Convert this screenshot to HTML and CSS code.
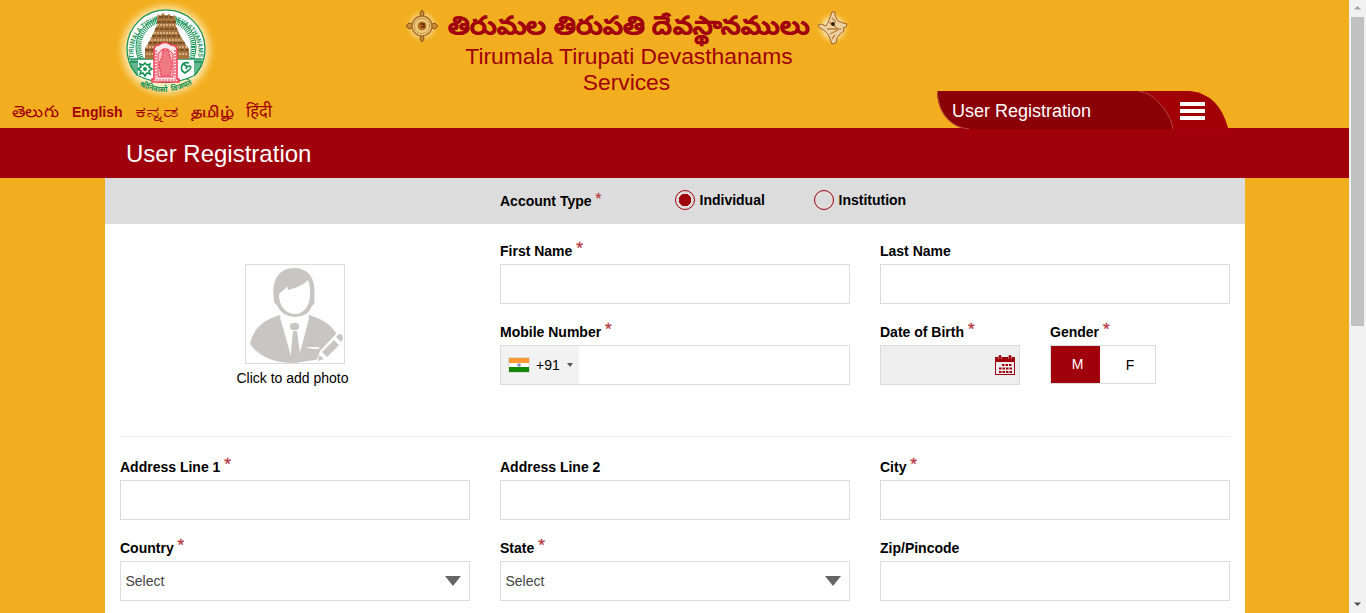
FILE: index.html
```html
<!DOCTYPE html>
<html lang="en">
<head>
<meta charset="utf-8">
<title>User Registration</title>
<link rel="stylesheet" href="styles.css">
</head>
<body>
<div class="page">
<header class="header">
  <div class="brand">
    <svg class="logo" viewBox="0 0 110 105">
      <defs>
        <radialGradient id="glow"><stop offset=".72" stop-color="#fff0c4"/><stop offset=".82" stop-color="#fbd98a" stop-opacity=".8"/><stop offset="1" stop-color="#f2ae1e" stop-opacity="0"/></radialGradient>
        <path id="arc" d="M24 58 A32.500 32.500 0 1 1 88 58"/>
        <path id="arcLow" d="M28 85 Q55 100 84 83"/>
      </defs>
      <circle cx="56" cy="50" r="52" fill="url(#glow)"/>
      <path d="M27 75A39 39 0 1 1 85 75Q56 90 27 75z" fill="#fff" stroke="#159254" stroke-width="1.300"/>
      <circle cx="56" cy="47" r="30" fill="#fff" stroke="#159254" stroke-width="1"/>
      <circle cx="56" cy="47" r="27" fill="none" stroke="#159254" stroke-width="4.500" stroke-dasharray="1 1"/>
      <text class="logo-ring"><textPath href="#arc" textLength="112" lengthAdjust="spacingAndGlyphs">TIRUMALA TIRUPATI • DEVASTHANAMS</textPath></text>
      <path d="M28 59h56v16q-28 12-56 0z" fill="#fff"/>
      <path d="M19.500 59H92.500M20 62H28M84 62H92M21 60v7M23 60v10M25 60v13M27 60v15M91 60v7M89 60v10M87 60v13M85 60v15" stroke="#159254" stroke-width="1.300" fill="none"/>
      <path d="M47 18l1-4 2 2 3-3 3 3 3-2 3 3 3-2 1 11 4 9 6 10 3 4v10H35V48l3-4 5-10 4-9z" fill="#a8733d"/>
      <path d="M49 17h15M47 22h19M45 29h22M42 36h28M38 43h37M35 50h43" stroke="#664525" stroke-width="1.300" stroke-dasharray="4 1"/>
      <path d="M47 25h19M44 33h24M41 40h31M36 47h41M36 54h42" stroke="#e6c294" stroke-width="1.700" stroke-dasharray="2 1"/>
      <path d="M44 79V49q1-4 5-4 6-5 12 0 5 0 6 4v30h2v3H42v-3z" fill="#ffe9e8" stroke="#ef4056" stroke-width="1.600"/>
      <path d="M48 77V54q7-11 15 0v23z" fill="#fbc0c3" stroke="#ee3551"/>
      <path d="M53 50h5l2 7 2 7-2 12H51l-2-12 3-7z" fill="#f07a84" stroke="#ed3652" stroke-width="1.200" stroke-dasharray="2 1"/>
      <path d="M46 50v28M65 50v28M43 80h26" fill="none" stroke="#ed3652" stroke-width="1.200" stroke-dasharray="2 1"/>
      <path d="M35 63l2 2 3-1-1 3 3 2-3 2 1 3-3-1-2 3-2-3-3 1 1-3-3-2 3-2-1-3 3 1zM79 63c-8-2-10 7-4 10l4-3c5-4-2-6-3-1M73 64l5 3" fill="none" stroke="#159254" stroke-width="1.600"/>
      <circle cx="35" cy="69" r="2" fill="#159254"/>
      <text class="logo-motto"><textPath href="#arcLow" startOffset="1" textLength="56" lengthAdjust="spacingAndGlyphs">श्रीनिवासो&#160; विजयते</textPath></text>
    </svg>
    <nav class="languages">
      <svg class="lang" width="48" height="20"><text x="0" y="15" textLength="48" lengthAdjust="spacingAndGlyphs">తెలుగు</text></svg>
      <span class="lang-en">English</span>
      <svg class="lang" width="43" height="20"><text x="0" y="15" textLength="43" lengthAdjust="spacingAndGlyphs">ಕನ್ನಡ</text></svg>
      <svg class="lang tamil" width="43" height="20"><text x="1" y="15" textLength="43" lengthAdjust="spacingAndGlyphs">தமிழ்</text></svg>
      <svg class="lang" width="27" height="20"><text class="hindi" x="1" y="15" textLength="26" lengthAdjust="spacingAndGlyphs">हिंदी</text></svg>
    </nav>
  </div>
  <div class="titles">
    <div class="telugu-row">
      <svg class="emblem" viewBox="0 0 36 40">
        <defs><radialGradient id="halo"><stop offset=".4" stop-color="#fff7de"/><stop offset="1" stop-color="#f2ae1e" stop-opacity="0"/></radialGradient></defs>
        <circle cx="18" cy="20" r="18" fill="url(#halo)"/>
        <path d="M18 4l2 3-1 5h-2l-1-5zM18 36l2-3-1-5h-2l-1 5zM2 20l3-3 6 2v2l-6 2zM34 20l-3-3-6 2v2l6 2z" fill="#c88b35" stroke="#8b5318"/>
        <circle cx="18" cy="20" r="10" fill="#edc979" stroke="#a96f27" stroke-width="1.500"/>
        <circle cx="18" cy="20" r="7.500" fill="none" stroke="#b77c30" stroke-dasharray="2 1"/>
        <circle cx="18" cy="20" r="5" fill="#b96e23" stroke="#f5d487"/><path d="M16 18h4v3h-3" fill="none" stroke="#612f10" stroke-width="1.500"/>
      </svg>
      <svg class="telugu" width="364" height="43"><text x="1" y="34" textLength="362" lengthAdjust="spacingAndGlyphs">తిరుమల తిరుపతి దేవస్థానములు</text></svg>
      <svg class="emblem conch" viewBox="0 0 36 40">
        <circle cx="18" cy="20" r="18" fill="url(#halo)"/>
        <path d="M17 4h3v4l3 5 5 2 4 1-1 3-3 1 1 3-4 3-3 4-1 5-4 1-3-8-4-5-5-3-2-3 3-1 5 2 3-6z" fill="#ecd2a0" stroke="#a06328"/>
        <path d="M14 14l8 6M12 21h14M15 26l8-4M17 31l3-4M17 10l4 4" stroke="#bd813e" stroke-width="1.300"/><circle cx="18" cy="16" r="2" fill="#38230f"/>
      </svg>
    </div>
    <div class="org">Tirumala Tirupati Devasthanams</div>
    <div class="services">Services</div>
  </div>
  <div class="menu">
    <svg class="menu-shape" viewBox="0 0 292 39"><path d="M0 0H253Q282 3 291 37V39H34C12 37 0 20 0 0z" fill="#a10005"/><path d="M0 .5H202C217 2 228 17 234 30L236 38H34C12 37 .5 20 .5.5z" fill="#8b0005"/><path d="M202 .5C217 2 228 17 234 30L236 38M.5 0C1 20 12 36 32 38" fill="none" stroke="#b5484a"/></svg>
    <span class="menu-title">User Registration</span>
    <span class="burger"><i></i><i></i><i></i></span>
  </div>
</header>
<div class="band"><h1>User Registration</h1></div>
<main class="panel">
  <div class="account">
    <span class="account-label">Account Type <sup>*</sup></span>
    <span class="radio"><i class="dot checked"></i>Individual</span>
    <span class="radio"><i class="dot"></i>Institution</span>
  </div>
  <section class="top grid">
    <div class="photo">
      <div class="photo-box">
        <svg viewBox="0 0 98 98" width="98" height="98">
          <path d="M28 34C25 14 34 3 48 3s23 10 20 31q2 4-2 7-4 11-17 11-14-1-18-12-4-2-3-6z" fill="#c9c5c5"/>
          <path d="M33 30c0-3 6-4 8-9l1 4c8-2 15-5 20-10 2 4 2 8 2 14 0 12-6 20-15 20S33 41 33 30z" fill="#fff"/>
          <path d="M4 79C8 61 20 54 34 50L48 98C25 98 12 90 4 79zM63 50C77 54 87 61 91 70L75 94 49 98z" fill="#c9c5c5"/>
          <path d="M34 53l3-3q12 5 24 0l2 3-3 12-8 30-3 3-3-3-8-29z" fill="#fff"/>
          <rect x="44" y="58" width="9" height="7" rx="3" fill="#c9c5c5"/><path d="M47 66h4l4 30-6 2-5-2z" fill="#c9c5c5"/>
          <path d="M60 82h14l-2 2q-8 0-12-2z" fill="#fff"/><path d="M71 94l3-8 16-17 8 7-16 17-10 3z" fill="#fff"/>
          <path d="M76 87l12-12 5 5-12 12zM90 72l3-3q4 0 4 5l-2 3zM73 90l5 4-6 2z" fill="#c9c5c5"/>
        </svg>
      </div>
      <span class="photo-text">Click to add photo</span>
    </div>
    <div class="field first"><label>First Name <sup>*</sup></label><div class="box"></div></div>
    <div class="field"><label>Last Name</label><div class="box"></div></div>
    <div class="field mobile-field"><label>Mobile Number <sup>*</sup></label>
      <div class="box mobile"><div class="code"><svg width="22" height="16"><rect x=".5" y=".5" width="21" height="15" fill="#fff" stroke="#ddd"/><path d="M1 1h20v5H1z" fill="#ff9933"/><path d="M1 10h20v5H1z" fill="#138808"/><circle cx="11" cy="8" r="1.800" fill="#8888cc"/></svg><span>+91</span><i class="tiny"></i></div></div>
    </div>
    <div class="pair">
      <div class="field dob"><label>Date of Birth <sup>*</sup></label><div class="box date">
        <svg width="20" height="20" viewBox="0 0 20 20"><path d="M0 2h3v2h4V2h6v2h4V2h3v18H0zM1 7v12h18V7z" fill="#a0000b" fill-rule="evenodd"/><rect x="3.500" y="0" width="3" height="5" rx="1.500" fill="#a0000b"/><rect x="13.500" y="0" width="3" height="5" rx="1.500" fill="#a0000b"/><path d="M7 10h10M4 13.500h13M4 17h13" stroke="#a0000b" stroke-width="2" stroke-dasharray="2.500 1"/></svg></div></div>
      <div class="field"><label>Gender <sup>*</sup></label><div class="gender"><span class="male">M</span><span class="female">F</span></div></div>
    </div>
  </section>
  <section class="grid address">
    <div class="field"><label>Address Line 1 <sup>*</sup></label><div class="box"></div></div>
    <div class="field"><label>Address Line 2</label><div class="box"></div></div>
    <div class="field"><label>City <sup>*</sup></label><div class="box"></div></div>
    <div class="field"><label>Country <sup>*</sup></label><div class="box select">Select<i class="arrow"></i></div></div>
    <div class="field"><label>State <sup>*</sup></label><div class="box select">Select<i class="arrow"></i></div></div>
    <div class="field"><label>Zip/Pincode</label><div class="box"></div></div>
  </section>
</main>
</div>
<aside class="scrollbar"><svg width="17" height="17"><path d="M5 9.500L8.500 6 12 9.500z" fill="#a3a3a3"/></svg><div class="thumb"></div><svg class="down" width="17" height="17"><path d="M5 6.500L8.500 10 12 6.500z" fill="#505050"/></svg></aside>
</body>
</html>
```

FILE: styles.css
```css
* { box-sizing: border-box; }
body { margin: 0; height: 613px; overflow: hidden; display: flex; background: #f2ae1e; font: 14px "Liberation Sans", Arial, sans-serif; color: #000; }
.page { width: 1349px; }
.header { height: 128px; display: grid; grid-template-columns: 400px 453px 1fr; color: #a0000b; }
.logo { display: block; width: 110px; height: 105px; margin-left: 110px; }
.logo-ring { font: bold 7px "Liberation Sans", sans-serif; fill: #159254; }
.logo-motto { font: bold 8px "Noto Sans", "Noto Sans Devanagari", sans-serif; fill: #159254; }
.brand { height: 128px; }
.languages { display: flex; gap: 12px; height: 20px; margin: -3px 0 0 12px; }
.lang { overflow: visible; font: 16px "Noto Sans", sans-serif; fill: #a0000b; }
.tamil { stroke: #a0000b; stroke-width: .5px; }
.lang .hindi { font-size: 17px; }
.lang-en { width: 51px; font: bold 14px/20px "Liberation Sans", sans-serif; }
.titles { text-align: center; font-size: 22.8px; }
.telugu-row { display: flex; height: 43px; }
.emblem { width: 36px; height: 40px; margin: 6px 7px 0 4px; flex: none; }
.conch { margin: 8px 0 0 4px; }
.telugu { overflow: visible; font: bold 25px "Noto Sans", sans-serif; fill: #a0000b; stroke: #a0000b; stroke-width: .4px; flex: none; }
.org { line-height: 26px; padding-left: 5px; }
.services { line-height: 26px; }
.menu { margin: 91px 0 -1px 84px; width: 292px; height: 39px; display: grid; grid-template-columns: 243px 1fr; align-items: center; color: #fff; }
.menu-shape { grid-area: 1 / 1 / 2 / 3; width: 292px; height: 39px; }
.menu-title { grid-area: 1 / 1; padding: 1px 0 0 15px; font-size: 18px; }
.burger { grid-area: 1 / 2; display: grid; gap: 3px; width: 25px; padding-top: 1px; }
.burger i { height: 4px; background: #fff; }
.band { height: 50px; background: #a0000b; color: #fff; padding-left: 126px; }
h1 { margin: 0; font-size: 24px; font-weight: 400; line-height: 51px; }
.panel { width: 1140px; height: 435px; margin-left: 105px; background: #fff; overflow: hidden; }
.account { height: 46px; padding: 0 0 2px 395px; background: #dcdcdc; display: flex; align-items: center; font-weight: 700; }
.account-label { width: 175px; padding-top: 1px; }
sup { color: #b5343a; font-size: 17px; font-weight: 400; line-height: 0; vertical-align: 2px; -webkit-text-stroke: .3px #b5343a; }
.account sup { font-size: 15px; vertical-align: 3px; }
.radio { display: flex; align-items: center; gap: 4.5px; width: 139px; white-space: nowrap; line-height: 20px; }
.dot { flex: none; width: 20px; height: 20px; border: 1px solid #a0000b; border-radius: 50%; }
.checked { background: radial-gradient(circle, #a0000b 0 6px, transparent 6.500px); }
.grid { margin: 0 15px; display: grid; grid-template-columns: repeat(3, 350px); column-gap: 30px; row-gap: 17px; }
.top { height: 213px; padding-top: 16px; align-content: start; border-bottom: 1px solid #eee; }
.address { padding-top: 19px; }
.field label { display: block; height: 24px; font-weight: 700; line-height: 22px; white-space: nowrap; }
.box { height: 40px; border: 1px solid #dcdcdc; background: #fff; }
.photo { grid-row: 1 / 3; height: 145px; display: flex; flex-direction: column; align-items: center; padding-top: 24px; }
.photo-box { flex: none; width: 100px; height: 100px; border: 1px solid #dcdcdc; }
.photo-text { line-height: 16px; margin: 6px 5px 0 0; }
.pair { display: grid; grid-template-columns: 140px 106px; gap: 30px; }
.code { width: 78px; height: 38px; background: #f2f2f2; display: flex; align-items: center; padding-left: 7px; }
.code span { margin-left: 6px; width: 31px; }
.tiny { border: 3px solid transparent; border-top: 4px solid #555; border-bottom: 0; }
.date { background: #eee; display: flex; align-items: center; justify-content: flex-end; padding-right: 4px; }
.gender { width: 106px; height: 39px; display: flex; border: 1px solid #dcdcdc; text-align: center; line-height: 38px; }
.male { width: 49px; background: #a0000b; color: #fff; line-height: 36px; padding-left: 4px; }
.female { width: 55px; padding-left: 5px; }
.select { display: flex; align-items: center; justify-content: space-between; padding: 0 8px 0 4.5px; color: #444; }
.arrow { border: 8px solid transparent; border-top: 10px solid #666; border-bottom: 0; }
.scrollbar { width: 17px; height: 613px; background: #f1f1f1; display: flex; flex-direction: column; }
.thumb { width: 13px; height: 309px; margin: 0 2px; background: #c1c1c1; }
.scrollbar svg { display: block; flex: none; }
.scrollbar .down { margin-top: auto; }
```
